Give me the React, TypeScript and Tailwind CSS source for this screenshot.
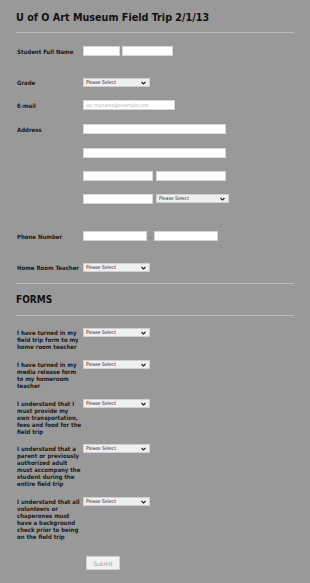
import type { ReactNode } from "react"

const font = { fontFamily: "'DejaVu Sans Condensed', 'DejaVu Sans', Verdana, sans-serif" }

function TextBox({ w, placeholder }: { w: string; placeholder?: string }) {
  return (
    <div
      className={`${w} h-[10px] bg-white border border-[#d6d6d6] text-[5px] leading-[8px] pl-[2px] text-[#b0b0b0] overflow-hidden whitespace-nowrap`}
    >
      {placeholder}
    </div>
  )
}

function Select({ w = "w-[67px]" }: { w?: string }) {
  return (
    <div
      className={`${w} h-[9px] shrink-0 bg-[#efefef] border border-[#cfcfcf] flex items-center justify-between pl-[2px] pr-[3px]`}
    >
      <span className="text-[5px] leading-none text-[#222]">Please Select</span>
      <svg width="5" height="4" viewBox="0 0 10 8">
        <path d="M1 2 L5 6 L9 2" fill="none" stroke="#222" strokeWidth="2.2" />
      </svg>
    </div>
  )
}

function Row({ label, mt, children }: { label: string; mt: string; children: ReactNode }) {
  return (
    <div className={`flex items-center ${mt}`}>
      <div className="w-[67px] pl-[1px] text-[6px] leading-[7px] font-bold text-[#1a1a1a] whitespace-nowrap">{label}</div>
      {children}
    </div>
  )
}

function Question({ label, mt }: { label: string; mt: string }) {
  return (
    <div className={`flex items-start ${mt}`}>
      <div className="w-[67px] pl-[1px] pr-[1px] pt-[1px] text-[6px] leading-[7px] font-bold text-[#1a1a1a]">
        {label}
      </div>
      <Select />
    </div>
  )
}

export default function App() {
  return (
    <div className="w-[310px] h-[583px] bg-[#999999] px-[16px] overflow-hidden" style={font}>
      <h1 className="pt-[11px] text-[10.7px] leading-[14px] font-bold text-[#111]">
        U of O Art Museum Field Trip 2/1/13
      </h1>
      <div className="mt-[7px] h-[1px] bg-[#bcbcbc]" />

      <Row label="Student Full Name" mt="mt-[13px]">
        <div className="flex gap-[2px]">
          <TextBox w="w-[37px]" />
          <TextBox w="w-[51px]" />
        </div>
      </Row>

      <Row label="Grade" mt="mt-[22px]">
        <Select />
      </Row>

      <Row label="E-mail" mt="mt-[13px]">
        <TextBox w="w-[92px]" placeholder="ex: myname@example.com" />
      </Row>

      <div className="flex mt-[14px]">
        <div className="w-[67px] pl-[1px] pt-[2px] text-[6px] leading-[7px] font-bold text-[#1a1a1a]">Address</div>
        <div className="flex flex-col">
          <TextBox w="w-[143px]" />
          <div className="mt-[14px]">
            <TextBox w="w-[143px]" />
          </div>
          <div className="mt-[13px] flex gap-[3px]">
            <TextBox w="w-[70px]" />
            <TextBox w="w-[70px]" />
          </div>
          <div className="mt-[13px] flex gap-[3px] items-start">
            <TextBox w="w-[70px]" />
            <Select w="w-[73px]" />
          </div>
        </div>
      </div>

      <Row label="Phone Number" mt="mt-[27px]">
        <div className="flex items-center">
          <TextBox w="w-[64px]" />
          <span className="w-[7px] text-center text-[6px] text-[#333]">-</span>
          <TextBox w="w-[64px]" />
        </div>
      </Row>

      <Row label="Home Room Teacher" mt="mt-[22px]">
        <Select />
      </Row>

      <div className="mt-[11px] h-[1px] bg-[#bcbcbc]" />
      <h2 className="mt-[10px] text-[10px] leading-[12px] font-bold text-[#111]">FORMS</h2>
      <div className="mt-[9px] h-[1px] bg-[#bcbcbc]" />

      <Question mt="mt-[12px]" label="I have turned in my field trip form to my home room teacher" />
      <Question mt="mt-[10px]" label="I have turned in my media release form to my homeroom teacher" />
      <Question mt="mt-[10px]" label="I understand that I must provide my own transportation, fees and food for the field trip" />
      <Question mt="mt-[9px]" label="I understand that a parent or previously authorized adult must accompany the student during the entire field trip" />
      <Question mt="mt-[10px]" label="I understand that all volunteers or chaperones must have a background check prior to being on the field trip" />

      <div className="mt-[16px] pl-[70px]">
        <div className="w-[34px] h-[14px] bg-[#f2f2f2] border border-[#d0d0d0] flex items-center justify-center text-[6px] text-[#9a9a9a]">
          Submit
        </div>
      </div>
    </div>
  )
}
